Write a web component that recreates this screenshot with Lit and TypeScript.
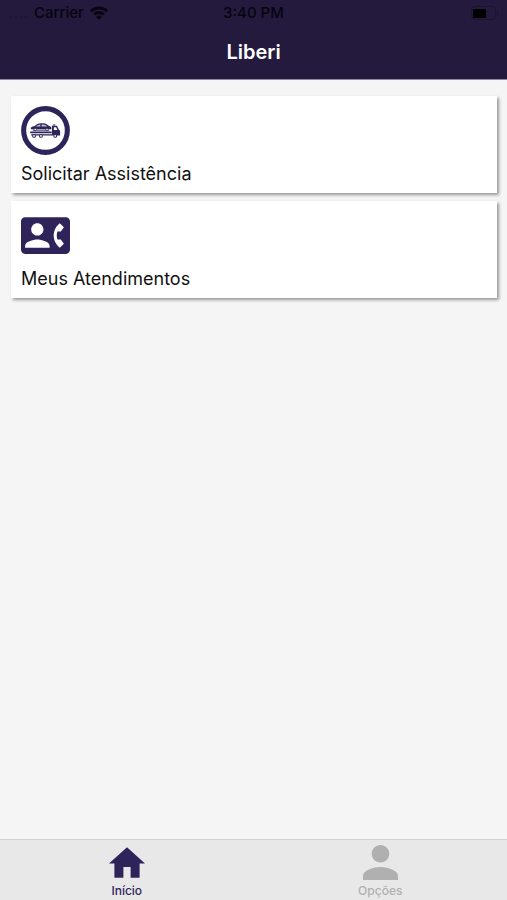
import { LitElement, html, css, svg } from "lit";
import { customElement, property } from "lit/decorators.js";

const towTruck = svg`
  <svg viewBox="0 0 48 48" width="49" height="49" aria-hidden="true">
    <circle cx="24" cy="24" r="21.4" fill="#fff" stroke="currentColor" stroke-width="5"/>
    <g fill="currentColor">
      <path d="M9.6 21.4c1-1.400 2.600-1.600 4-1.900 1.700-1.700 3.200-2.500 5.800-2.700h2.600c2.300.2 3.800 1.300 5.500 2.700 1.300.2 2.300.8 2.300 2.300v1H9.600z"/>
      <path d="M11.500 23.200h16.200v1.100H11.500z" opacity=".75"/>
      <path d="M9 24.900h21v1.700H9zM10 27.600h20.500v1.300H10z"/>
      <path fill-rule="evenodd" d="M30.300 19.300h4.900l2 4 1.100.9v4.700h-8zM32.200 20.700v2.800h3.500l-1.300-2.800z"/>
      <path d="M31.200 18h2.400v1h-2.400z"/>
    </g>
    <path d="M14.600 20.200c1.300-1.300 2.600-1.900 4.300-2.100v2.100zM20.200 18.100h1.700c1.600.2 2.900.9 3.900 2.100h-5.600z" fill="#fff" opacity=".7"/>
    <g fill="#fff" stroke="currentColor" stroke-width="1">
      <circle cx="12.800" cy="29.300" r="1.400"/><circle cx="19.500" cy="29.300" r="1.400"/><circle cx="33.500" cy="29.300" r="1.400"/>
    </g>
    <g fill="#fff" stroke="currentColor" stroke-width=".9">
      <circle cx="14" cy="23" r="1.200"/><circle cx="25.500" cy="23" r="1.200"/>
    </g>
  </svg>`;

const contactPhone = svg`
  <svg viewBox="0 0 24 24" width="49" height="49" aria-hidden="true">
    <path fill="currentColor" d="M22 3H2C.9 3 0 3.900 0 5v14c0 1.100.9 2 2 2h20c1.100 0 1.990-.9 1.990-2L24 5c0-1.100-.9-2-2-2zM8 6c1.660 0 3 1.340 3 3s-1.340 3-3 3-3-1.340-3-3 1.340-3 3-3zm6 12H2v-1c0-2 4-3.100 6-3.100s6 1.100 6 3.100v1zm3.850-4h1.640L21 16l-1.990 1.990c-1.310-.98-2.280-2.380-2.730-3.990-.18-.64-.28-1.310-.28-2s.1-1.360.28-2c.45-1.620 1.420-3.010 2.730-3.990L21 8l-1.510 2h-1.640c-.22.63-.35 1.300-.35 2s.13 1.370.35 2z"/>
  </svg>`;

const home = svg`
  <svg viewBox="2 3 20 17" width="36" height="31" aria-hidden="true">
    <path fill="currentColor" d="M10 20v-6h4v6h5v-8h3L12 3 2 12h3v8z"/>
  </svg>`;

const person = svg`
  <svg viewBox="4 4 16 16" width="35" height="35" aria-hidden="true">
    <path fill="currentColor" d="M12 12c2.210 0 4-1.790 4-4s-1.790-4-4-4-4 1.790-4 4 1.790 4 4 4zm0 2c-2.670 0-8 1.340-8 4v2h16v-2c0-2.660-5.330-4-8-4z"/>
  </svg>`;

const signal = svg`
  <svg viewBox="0 0 20 14" width="20" height="14" aria-hidden="true">
    <g fill="#1e1636">
      <circle cx="3" cy="11" r="1.500"/><circle cx="8" cy="11" r="1.500"/><circle cx="13" cy="11" r="1.500"/><circle cx="18" cy="11" r="1.500"/>
    </g>
  </svg>`;

const wifi = svg`
  <svg viewBox="0 0 18 14" width="18" height="14" aria-hidden="true">
    <g fill="none" stroke="currentColor" stroke-width="2.800">
      <path d="M1 5.200a11.400 11.400 0 0 1 16 0"/>
      <path d="M4.200 8.500a6.800 6.800 0 0 1 9.600 0"/>
    </g>
    <path fill="currentColor" d="M9 13.700l-2.700-2.800a3.800 3.800 0 0 1 5.400 0z"/>
  </svg>`;

const battery = svg`
  <svg viewBox="0 0 30 14" width="30" height="14" aria-hidden="true">
    <rect x="2.500" y=".5" width="24" height="13" rx="4" fill="none" stroke="#1b1331"/>
    <rect x="4" y="3" width="13" height="9" rx="1" fill="#000"/>
    <path d="M28 5v4.500c1.300-.4 1.300-4.100 0-4.500z" fill="#1b1331"/>
  </svg>`;

@customElement("service-card")
class ServiceCard extends LitElement {
  @property() label = "";
  static styles = css`
    :host { display: block; }
    .card {
      display: flex;
      flex-direction: column;
      align-items: flex-start;
      gap: 8px;
      width: 100%;
      padding: 10px 10px 8px;
      border: 0;
      background: #fff;
      box-shadow: 2px 2px 3px rgba(0, 0, 0, 0.38);
      color: #111;
      font: 400 18px/22px Inter, "Liberation Sans", sans-serif;
      text-align: left;
      cursor: pointer;
    }
    .icon { display: flex; color: #2e2459; }
  `;
  render() {
    return html`<button class="card" type="button">
      <span class="icon"><slot></slot></span>
      <span>${this.label}</span>
    </button>`;
  }
}

@customElement("app-root")
class AppRoot extends LitElement {
  static styles = css`
    :host {
      display: flex;
      flex-direction: column;
      min-height: 100vh;
      background: #f5f5f5;
      font-family: Inter, "Liberation Sans", sans-serif;
    }
    header { background: #231a3d; border-bottom: 1px solid #8d88a0; }
    .status {
      display: grid;
      grid-template-columns: 1fr auto 1fr;
      align-items: center;
      height: 26px;
      padding: 0 8px;
      color: #07040f;
      font-size: 15px;
      font-weight: 500;
      line-height: 18px;
    }
    .status svg { display: block; }
    .carrier { display: flex; align-items: center; gap: 6px; }
    .battery { justify-self: end; }
    h1 {
      margin: 0;
      padding: 13px 0;
      color: #fff;
      font-size: 20px;
      font-weight: 600;
      line-height: 27px;
      text-align: center;
    }
    main {
      flex: 1;
      display: flex;
      flex-direction: column;
      gap: 8px;
      padding: 16px 10px 16px 11px;
    }
    nav {
      display: flex;
      border-top: 1px solid #d2d2d2;
      background: #e8e8e8;
    }
    .tab {
      flex: 1;
      display: flex;
      flex-direction: column;
      align-items: center;
      height: 60px;
      color: #b0b0b0;
      font-size: 12px;
      font-weight: 500;
      line-height: 14px;
      text-decoration: none;
    }
    .tab.active { color: #2e2459; }
    .glyph { display: flex; align-items: center; height: 43px; padding-top: 1px; }
  `;
  render() {
    return html`
      <header>
        <div class="status">
          <span class="carrier">${signal} Carrier ${wifi}</span>
          <span class="time">3:40 PM</span>
          <span class="battery">${battery}</span>
        </div>
        <h1>Liberi</h1>
      </header>
      <main>
        <service-card label="Solicitar Assistência">${towTruck}</service-card>
        <service-card label="Meus Atendimentos">${contactPhone}</service-card>
      </main>
      <nav>
        <a class="tab active" href="#inicio" aria-current="page"><span class="glyph">${home}</span>Início</a>
        <a class="tab" href="#opcoes"><span class="glyph">${person}</span>Opções</a>
      </nav>
    `;
  }
}
